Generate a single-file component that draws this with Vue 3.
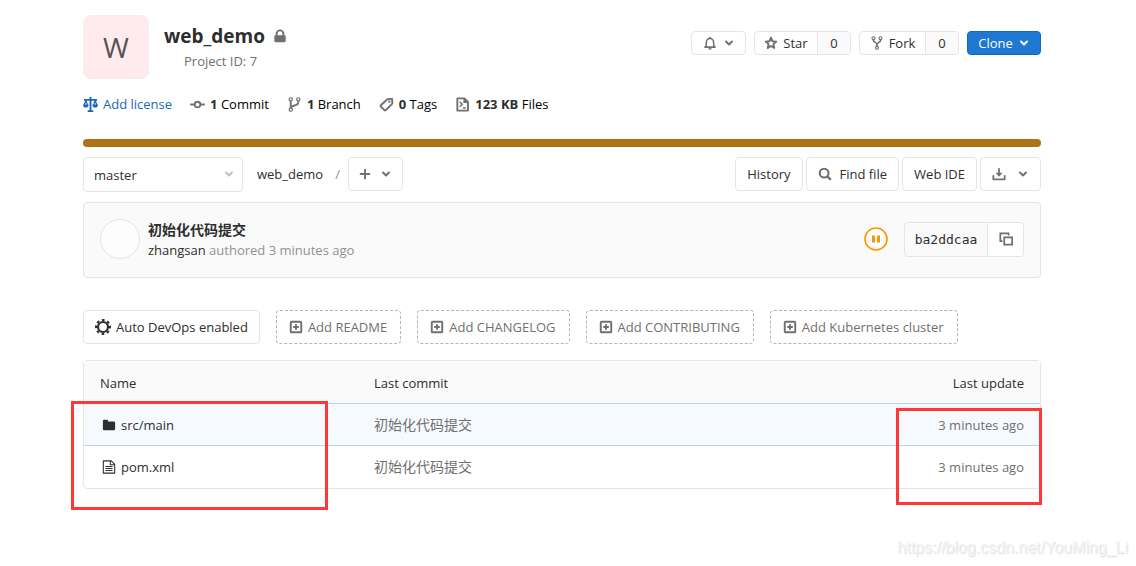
<script setup>
import { ref } from 'vue'

const branch = ref('master')

const stats = [
  { icon: 'commit', value: '1', label: 'Commit' },
  { icon: 'branch', value: '1', label: 'Branch' },
  { icon: 'tag', value: '0', label: 'Tags' },
  { icon: 'disk', value: '123 KB', label: 'Files' },
]

const suggestions = ['Add README', 'Add CHANGELOG', 'Add CONTRIBUTING', 'Add Kubernetes cluster']

const files = [
  { name: 'src/main', icon: 'folder', commit: '初始化代码提交', updated: '3 minutes ago', active: true },
  { name: 'pom.xml', icon: 'file', commit: '初始化代码提交', updated: '3 minutes ago', active: false },
]
</script>

<template>
  <div class="page">
    <svg class="sprite" aria-hidden="true">
      <symbol id="lock" viewBox="0 0 16 16">
        <path fill="currentColor" fill-rule="evenodd" d="M3 7V5.500a5 5 0 0 1 10 0V7a1.500 1.500 0 0 1 1.500 1.500v5A1.500 1.500 0 0 1 13 15H3a1.500 1.500 0 0 1-1.500-1.500v-5A1.500 1.500 0 0 1 3 7zm2.200 0h5.600V5.500a2.800 2.800 0 0 0-5.600 0z" />
      </symbol>
      <symbol id="scale" viewBox="0 0 16 16">
        <path fill="none" stroke="currentColor" stroke-width="2" d="M8 0v14M1 3h14M5 15h6" />
        <path fill="none" stroke="currentColor" stroke-width="1.300" d="M3 3.500 1.200 9M3 3.500 4.800 9M13 3.500 11.200 9M13 3.500 14.800 9" />
        <path fill="currentColor" d="M0 8h6a3 3.300 0 0 1-6 0zM10 8h6a3 3.300 0 0 1-6 0z" />
      </symbol>
      <symbol id="commit" viewBox="0 0 16 16">
        <circle cx="8" cy="8" r="3" fill="none" stroke="currentColor" stroke-width="2" />
        <path stroke="currentColor" stroke-width="2" stroke-linecap="round" d="M1 8h3M12 8h3" />
      </symbol>
      <symbol id="branch" viewBox="0 0 16 16">
        <g fill="none" stroke="currentColor" stroke-width="1.300">
          <circle cx="4" cy="2.500" r="1.700" /><circle cx="12" cy="2.500" r="1.700" /><circle cx="4" cy="13.500" r="1.700" />
        </g>
        <path fill="none" stroke="currentColor" stroke-width="2" d="M4 4.500v7M12 4.500v1.200c0 1.500-.800 2.400-2.200 2.800L6.500 9.600C5 10 4 10.500 4 12" />
      </symbol>
      <symbol id="tag" viewBox="0 0 16 16">
        <path fill="none" stroke="currentColor" stroke-width="2" stroke-linejoin="round" d="M9.200 2.200 14 2l.200 5-7 7a1 1 0 0 1-1.400 0L2 10.200a1 1 0 0 1 0-1.400z" />
        <circle cx="11" cy="5" r="1.200" fill="currentColor" />
      </symbol>
      <symbol id="disk" viewBox="0 0 16 16">
        <path fill="none" stroke="currentColor" stroke-width="2" stroke-linejoin="round" d="M2.500 1.500H10l3.800 3.800v9.200H2.500z" />
        <path fill="none" stroke="currentColor" stroke-width="1.500" d="m5 5.200 2.800 2.600L5 10.400M8.500 11.700h3" />
        <path fill="currentColor" d="M9 1.500h1.500L14 5v1.500H9z" />
      </symbol>
      <symbol id="bell" viewBox="0 0 16 16">
        <path fill="none" stroke="currentColor" stroke-width="1.800" stroke-linejoin="round" d="M1.500 12.700h13M3 12.500c.800-1 .900-2.500.900-5.500a4.100 4.100 0 0 1 8.200 0c0 3 .100 4.500.900 5.500" />
        <path fill="currentColor" d="M7 1h2v2H7zM6 14h4a2 1.800 0 0 1-4 0z" />
      </symbol>
      <symbol id="star" viewBox="0 0 16 16">
        <path fill="none" stroke="currentColor" stroke-width="2.200" stroke-linejoin="round" d="m8 2 1.700 4 4.300.400-3.200 2.900.900 4.300L8 11.400l-3.700 2.200.900-4.300L2 6.400 6.300 6z" />
      </symbol>
      <symbol id="fork" viewBox="0 0 16 16">
        <g fill="none" stroke="currentColor" stroke-width="1.300">
          <circle cx="4" cy="2.500" r="1.700" /><circle cx="12" cy="2.500" r="1.700" /><circle cx="8" cy="13.500" r="1.700" />
        </g>
        <path fill="none" stroke="currentColor" stroke-width="1.800" d="M4 4.300V5c0 2.500 4 2 4 5v2M12 4.300V5c0 2.500-4 2-4 5" />
      </symbol>
      <symbol id="chevron" viewBox="0 0 16 16">
        <path fill="none" stroke="currentColor" stroke-width="2.600" stroke-linecap="round" stroke-linejoin="round" d="m4 6 4 4 4-4" />
      </symbol>
      <symbol id="plus" viewBox="0 0 16 16">
        <path stroke="currentColor" stroke-width="2.200" stroke-linecap="round" d="M8 3v10M3 8h10" />
      </symbol>
      <symbol id="search" viewBox="0 0 16 16">
        <circle cx="7" cy="7" r="5" fill="none" stroke="currentColor" stroke-width="2.400" />
        <path stroke="currentColor" stroke-width="2.600" stroke-linecap="round" d="m11 11 3 3" />
      </symbol>
      <symbol id="download" viewBox="0 0 16 16">
        <path fill="none" stroke="currentColor" stroke-width="2" stroke-linecap="round" stroke-linejoin="round" d="M1.500 10v4h13v-4M8 2v7" />
        <path fill="currentColor" d="M4 6.500h8L8 11z" />
      </symbol>
      <symbol id="copy" viewBox="0 0 16 16">
        <path fill="none" stroke="currentColor" stroke-width="2" d="M6 6h9v8.500H6z" />
        <path fill="none" stroke="currentColor" stroke-width="2" d="M4 10.500H1.500v-9H11V4" />
      </symbol>
      <symbol id="gear" viewBox="0 0 16 16">
        <circle cx="8" cy="8" r="5" fill="none" stroke="currentColor" stroke-width="2.200" />
        <circle cx="8" cy="8" r="7" fill="none" stroke="currentColor" stroke-width="2" stroke-dasharray="2.750 2.750" stroke-dashoffset="1.375" />
      </symbol>
      <symbol id="plus-square" viewBox="0 0 16 16">
        <rect x="2" y="2" width="12" height="12" rx="1" fill="none" stroke="currentColor" stroke-width="2.200" />
        <path stroke="currentColor" stroke-width="2.200" d="M8 4.800v6.400M4.800 8h6.400" />
      </symbol>
      <symbol id="folder" viewBox="0 0 16 16">
        <path fill="currentColor" d="M1 3.500A1.500 1.500 0 0 1 2.500 2h3A1.500 1.500 0 0 1 7 3.500V4h6.500A1.500 1.500 0 0 1 15 5.500v7a1.500 1.500 0 0 1-1.500 1.500h-11A1.500 1.500 0 0 1 1 12.500z" />
      </symbol>
      <symbol id="file" viewBox="0 0 16 16">
        <path fill="none" stroke="currentColor" stroke-width="1.200" stroke-linejoin="round" d="M1.500 1h9L14.500 5v10h-13zM9.500 1V5.500H14" />
        <path stroke="currentColor" stroke-width="1.200" d="M4 7.500h8M4 9.700h8M4 11.900h8" />
      </symbol>
      <symbol id="pause" viewBox="0 0 24 24">
        <circle cx="12" cy="12" r="11" fill="#fff" stroke="currentColor" stroke-width="1.600" />
        <path fill="currentColor" d="M8 8.500h3v7H8zM13 8.500h3v7h-3z" />
      </symbol>
    </svg>

    <header class="project">
      <div class="avatar">W</div>
      <div class="identity">
        <h1>web_demo <svg class="icon lock"><use href="#lock" /></svg></h1>
        <p>Project ID: 7</p>
      </div>
      <div class="actions">
        <button class="small bell" type="button" aria-label="Notification setting">
          <svg class="icon"><use href="#bell" /></svg>
          <svg class="icon chevron"><use href="#chevron" /></svg>
        </button>
        <div class="counter star">
          <button type="button"><svg class="icon"><use href="#star" /></svg>Star</button>
          <a href="#">0</a>
        </div>
        <div class="counter fork">
          <button type="button"><svg class="icon"><use href="#fork" /></svg>Fork</button>
          <a href="#">0</a>
        </div>
        <button class="small clone" type="button">
          Clone<svg class="icon chevron"><use href="#chevron" /></svg>
        </button>
      </div>
    </header>

    <nav class="stats">
      <a class="license" href="#"><svg class="icon"><use href="#scale" /></svg>Add license</a>
      <a v-for="s in stats" :key="s.label" href="#">
        <svg class="icon"><use :href="'#' + s.icon" /></svg>
        <span><strong>{{ s.value }}</strong> {{ s.label }}</span>
      </a>
    </nav>

    <div class="language"></div>

    <div class="tree-bar">
      <div class="ref">
        <select v-model="branch" aria-label="Branch">
          <option>master</option>
        </select>
        <svg class="icon chevron"><use href="#chevron" /></svg>
      </div>
      <a class="crumb" href="#">web_demo</a>
      <span class="slash">/</span>
      <button class="btn plus" type="button" aria-label="Add to tree">
        <svg class="icon"><use href="#plus" /></svg>
        <svg class="icon chevron"><use href="#chevron" /></svg>
      </button>
      <div class="tools">
        <button class="btn" type="button">History</button>
        <button class="btn find" type="button"><svg class="icon"><use href="#search" /></svg>Find file</button>
        <button class="btn" type="button">Web IDE</button>
        <button class="btn download" type="button" aria-label="Download">
          <svg class="icon"><use href="#download" /></svg>
          <svg class="icon chevron"><use href="#chevron" /></svg>
        </button>
      </div>
    </div>

    <section class="commit">
      <div class="face"></div>
      <div class="message">
        <a class="title" href="#">初始化代码提交</a>
        <div class="author"><a href="#">zhangsan</a> authored 3 minutes ago</div>
      </div>
      <svg class="pipeline"><use href="#pause" /></svg>
      <div class="sha">
        <span>ba2ddcaa</span>
        <button type="button" aria-label="Copy commit SHA"><svg class="icon"><use href="#copy" /></svg></button>
      </div>
    </section>

    <div class="suggestions">
      <a class="btn devops" href="#"><svg class="icon gear"><use href="#gear" /></svg>Auto DevOps enabled</a>
      <a v-for="s in suggestions" :key="s" class="btn dashed" href="#">
        <svg class="icon"><use href="#plus-square" /></svg>{{ s }}
      </a>
    </div>

    <div class="table-frame">
      <table>
        <thead>
          <tr><th>Name</th><th>Last commit</th><th>Last update</th></tr>
        </thead>
        <tbody>
          <tr v-for="f in files" :key="f.name" :class="{ active: f.active }">
            <td><a href="#"><svg class="icon"><use :href="'#' + f.icon" /></svg>{{ f.name }}</a></td>
            <td class="subject">{{ f.commit }}</td>
            <td>{{ f.updated }}</td>
          </tr>
        </tbody>
      </table>
      <div class="mark names"></div>
      <div class="mark times"></div>
    </div>

    <footer>https://blog.csdn.net/YouMing_Li</footer>
  </div>
</template>

<style>
body { background: #fff; }
</style>

<style scoped>
* { box-sizing: border-box; }
.page {
  padding: 15px 95px 0 83px;
  font: 13px/20px "Open Sans", "Noto Sans CJK SC", sans-serif;
  color: #2e2e2e;
}
.sprite { position: absolute; width: 0; height: 0; }
a { color: inherit; text-decoration: none; }
button { font: inherit; color: inherit; margin: 0; cursor: pointer; }
.icon { width: 14px; height: 14px; flex: none; color: #707070; }
.icon.chevron { width: 12px; height: 12px; }

.project { display: flex; height: 64px; }
.avatar {
  width: 66px; height: 64px; border: 1px solid #f5eeee; border-radius: 8px;
  background: #ffebee; color: #555; font-size: 28px; line-height: 62px; text-align: center;
}
.identity { margin-left: 15px; padding-top: 8px; }
h1 { display: flex; align-items: center; gap: 8px; margin: 0; font-size: 19px; line-height: 26px; font-weight: 700; }
.identity p { margin: 2px 0 0 20px; color: #707070; }
.actions { display: flex; gap: 8px; margin: 16px 0 0 auto; height: 24px; }
.small, .counter { display: flex; align-items: center; justify-content: center; border: 1px solid #e5e5e5; border-radius: 4px; background: #fff; padding: 0; }
.bell { width: 55px; gap: 6px; }
.star { width: 97px; }
.fork { width: 100px; }
.counter { overflow: hidden; }
.counter button { display: flex; flex: 1; align-items: center; justify-content: center; gap: 5px; height: 100%; padding: 0; border: 0; background: none; }
.counter a { width: 33px; height: 100%; border-left: 1px solid #e5e5e5; background: #fafafa; line-height: 22px; text-align: center; }
.clone { width: 74px; gap: 5px; border-color: #1068bf; background: #1f78d1; color: #fff; }
.clone .icon { color: #fff; }

.stats { display: flex; gap: 18px; margin-top: 15px; color: #000; }
.stats a { display: flex; align-items: center; gap: 5px; }
.stats .icon { width: 15px; height: 15px; }
.stats strong { color: #2e2e2e; }
.stats .license, .license .icon { color: #1b69b6; }

.language { height: 8px; margin-top: 25px; border-radius: 4px; background: #b07219; }

.btn {
  display: flex; align-items: center; justify-content: center; height: 34px;
  padding: 0 11px; border: 1px solid #e5e5e5; border-radius: 4px; background: #fff; white-space: nowrap;
}
.tree-bar { display: flex; margin-top: 10px; height: 35px; }
.ref { position: relative; width: 160px; }
.ref select {
  width: 100%; height: 35px; padding: 0 10px; border: 1px solid #e5e5e5; border-radius: 4px;
  appearance: none; background: #fff; font: inherit; color: inherit;
}
.ref .icon { position: absolute; right: 8px; top: 11px; color: #bfbfbf; pointer-events: none; }
.crumb { margin-left: 14px; line-height: 34px; }
.slash { margin: 0 8px 0 12px; line-height: 34px; color: #8f8f8f; }
.plus { width: 55px; gap: 8px; }
.tools { display: flex; gap: 3px; margin-left: auto; }
.find { gap: 8px; }
.download { width: 61px; gap: 11px; }

.commit {
  display: flex; align-items: center; height: 76px; margin-top: 10px; padding: 0 16px 2px;
  border: 1px solid #e5e5e5; border-radius: 4px; background: #fafafa;
}
.face { width: 40px; height: 40px; border: 1px solid #e5e5e5; border-radius: 50%; background: #fdfdfd; }
.message { margin: 2px auto 0 8px; line-height: 21px; }
.title { display: block; font-size: 14px; font-weight: 700; }
.author { color: #919191; }
.author a { color: #2e2e2e; }
.pipeline { width: 24px; height: 24px; margin-right: 16px; color: #fc9403; }
.sha { display: flex; width: 120px; height: 35px; border: 1px solid #e5e5e5; border-radius: 4px; overflow: hidden; }
.sha span { flex: 1; font: 13px/33px "DejaVu Sans Mono", monospace; text-align: center; }
.sha button { display: flex; align-items: center; justify-content: center; width: 36px; padding: 0; border: 0; border-left: 1px solid #e5e5e5; background: #fff; }

.suggestions { display: flex; gap: 16px; margin-top: 32px; }
.dashed { gap: 5px; padding: 0 13px 0 12px; border: 1px dashed #b5b5b5; color: #707070; }
.devops { gap: 5px; }
.gear { width: 16px; height: 16px; color: #2e2e2e; }

.table-frame { position: relative; margin-top: 16px; border: 1px solid #e5e5e5; border-radius: 4px; }
table { width: 100%; border-collapse: separate; border-spacing: 0; table-layout: fixed; }
th, td { height: 42px; padding: 0 16px; text-align: left; font-weight: 400; }
th { padding-top: 2px; background: #fafafa; }
th:first-child { width: 274px; }
th:last-child, td:last-child { width: 180px; text-align: right; }
td { color: #707070; }
td a { display: flex; align-items: center; gap: 5px; padding-left: 2px; color: #2e2e2e; }
td .icon { color: #2e2e2e; }
.subject { font-size: 14px; }
.active td { height: 43px; background: #f6fafe; border-top: 1px solid #b8d6f4; border-bottom: 1px solid #b8d6f4; }

.mark { position: absolute; border: 3px solid #ff3737; pointer-events: none; }
.names { left: -13px; top: 40px; width: 257px; height: 109px; }
.times { right: -2px; top: 47px; width: 146px; height: 97px; }

footer { margin: 49px -87px 0 0; font: 16px/20px "Liberation Sans", Arial, sans-serif; color: #f4f4f4; text-shadow: 1px 1px 1px #ddd; text-align: right; }
</style>
